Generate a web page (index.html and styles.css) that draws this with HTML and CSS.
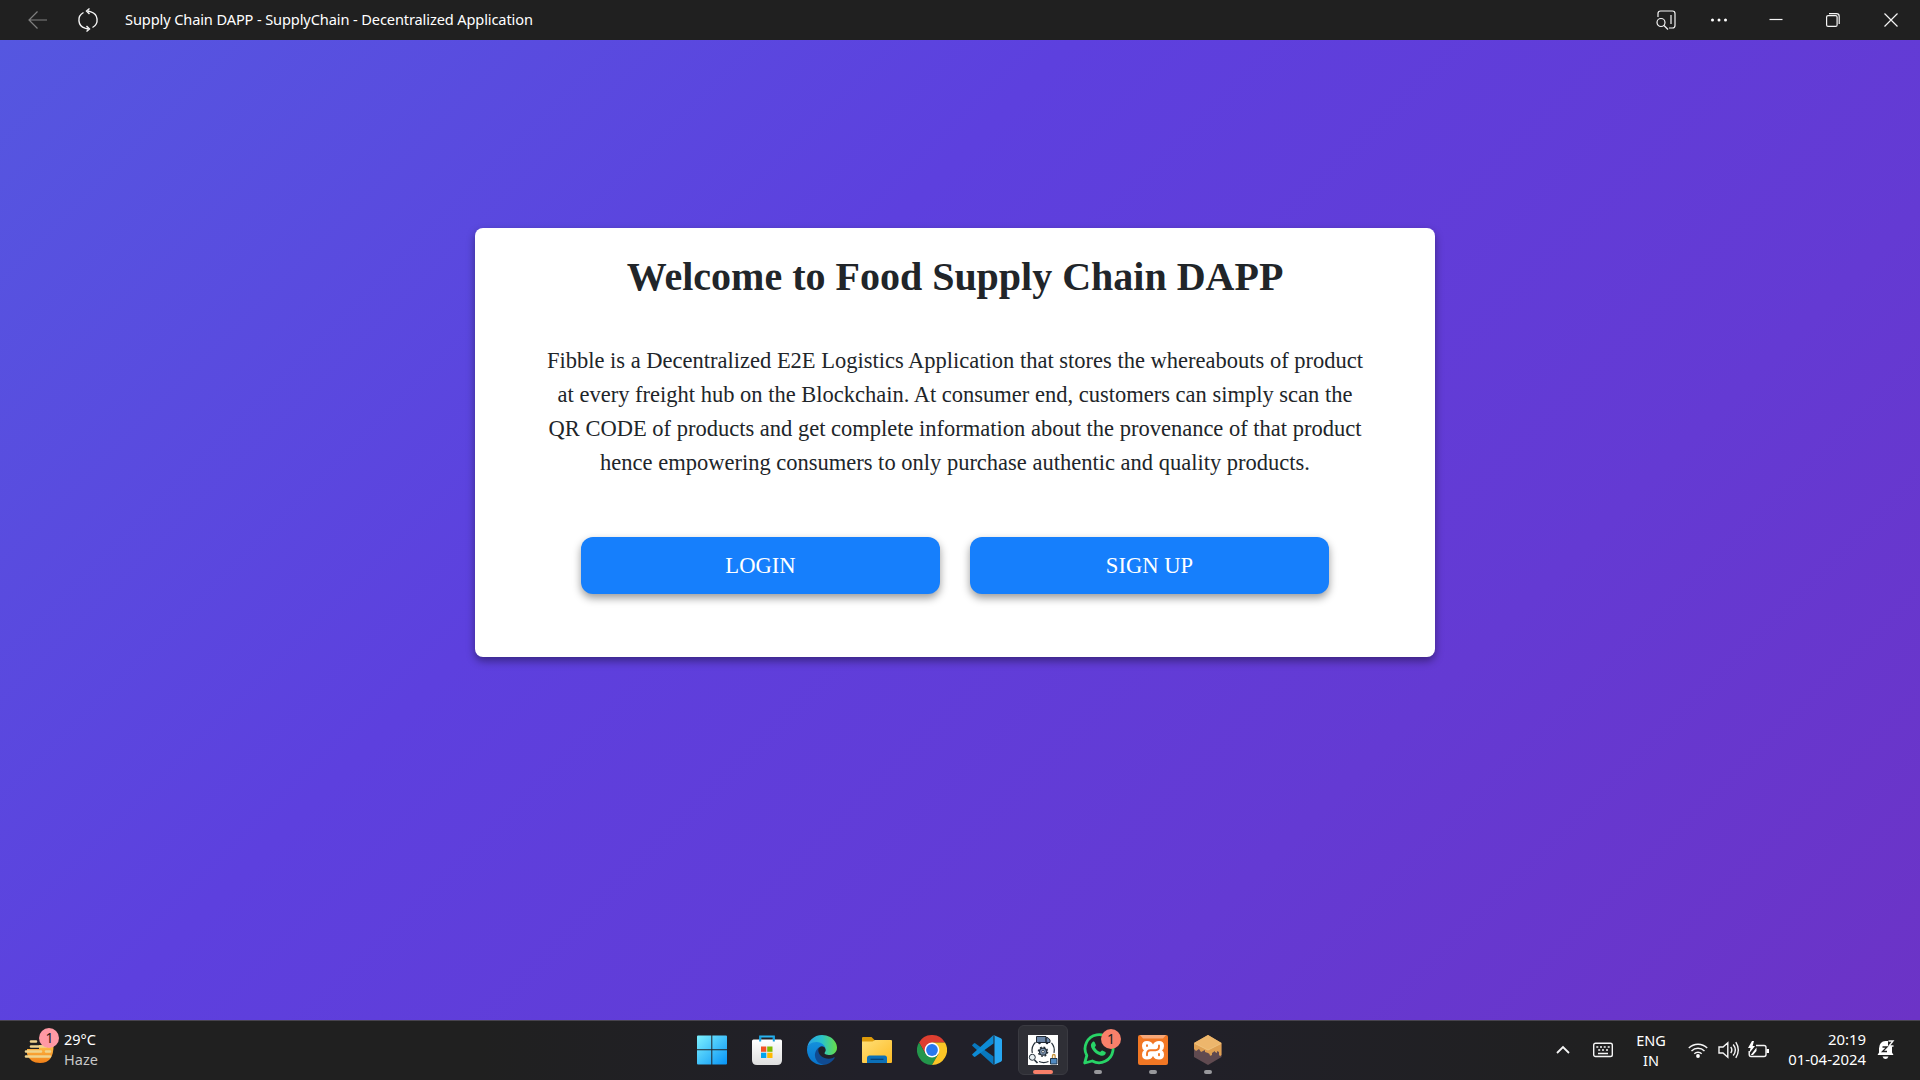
FILE: index.html
```html
<!DOCTYPE html>
<html lang="en">
<head>
<meta charset="utf-8">
<title>Supply Chain DAPP</title>
<link rel="stylesheet" href="styles.css">
</head>
<body>
<header class="titlebar">
  <svg class="back" width="20" height="20" viewBox="0 0 20 20"><path d="M19 10H1M9.500 1.500L1 10l8.500 8.500"/></svg>
  <svg class="reload" width="20" height="24" viewBox="0 0 20 24"><path d="M5.500 4.500A8.500 8.500 0 0 0 7 20.200L10 21M14.500 19.500A8.500 8.500 0 0 0 13 3.800L10 3M11.500 .5L8.500 3l3 3M8.500 18l3 3-3 2.500"/></svg>
  <span class="app-title">Supply Chain DAPP - SupplyChain - Decentralized Application</span>
  <div class="controls">
    <svg width="20" height="20" viewBox="0 0 20 20"><path d="M2 7V3.500Q2 1 4.500 1h12Q19 1 19 3.500v12Q19 18 16.500 18H13M15 5v9"/><circle cx="5" cy="12.500" r="4"/><path d="M8 15.500l4 4"/></svg>
    <svg width="20" height="20" viewBox="0 0 20 20"><g class="solid"><circle cx="3.500" cy="10" r="1.500"/><circle cx="10" cy="10" r="1.500"/><circle cx="16.500" cy="10" r="1.500"/></g></svg>
    <svg width="14" height="14" viewBox="0 0 14 14"><path d="M.5 6.500h13"/></svg>
    <svg width="14" height="14" viewBox="0 0 14 14"><rect x=".6" y="2.600" width="10.500" height="10.800" rx="1.500"/><path d="M3 .6h7.500Q13.200 .6 13.200 3.300V11"/></svg>
    <svg width="14" height="14" viewBox="0 0 14 14"><path d="M.5 .5l13 13M13.500 .5l-13 13"/></svg>
  </div>
</header>
<main class="page">
  <section class="card">
    <h1>Welcome to Food Supply Chain DAPP</h1>
    <p>Fibble is a Decentralized E2E Logistics Application that stores the whereabouts of product<br>at every freight hub on the Blockchain. At consumer end, customers can simply scan the<br>QR CODE of products and get complete information about the provenance of that product<br>hence empowering consumers to only purchase authentic and quality products.</p>
    <div class="actions"><button type="button">LOGIN</button><button type="button">SIGN UP</button></div>
  </section>
</main>
<footer class="taskbar">
  <div class="weather">
    <svg width="36" height="38" viewBox="0 0 36 38">
      <defs><linearGradient id="sun" x2="0" y2="1"><stop offset="0" stop-color="#ffc14c"/><stop offset="1" stop-color="#f18018"/></linearGradient></defs>
      <path d="M3 22H15V18H29.500Q30 36 16 36 6 36 3 27z" fill="url(#sun)"/>
      <path d="M7 14.500h5M7 19.500h15M2 24.500h15M22 24.500h4M2 29.500h24" stroke="#efd48d" stroke-width="2.600" stroke-linecap="round"/>
      <circle cx="25" cy="11" r="10" fill="#ff99a4"/><text x="25.500" y="16" class="badge">1</text>
    </svg>
    <div><div>29°C</div><div class="dim">Haze</div></div>
  </div>
  <nav class="apps">
    <div class="app"><svg width="30" height="30" viewBox="0 0 30 30"><defs><linearGradient id="win" x2="1" y2="1"><stop offset="0" stop-color="#7df1ff"/><stop offset="1" stop-color="#0793f5"/></linearGradient></defs><path d="M0 1.500Q0 .5 1 .5H14.300V14.300H0zM15.300 .5H29q1 0 1 1V14.300H15.300zM0 15.300H14.300V29.500H1q-1 0-1-1zM15.300 15.300H30V28.500q0 1-1 1H15.300z" fill="url(#win)"/></svg></div>
    <div class="app"><svg width="30" height="30" viewBox="0 0 30 30"><path d="M8.200 6V1.500H21.800V6" fill="none" stroke="#2ab4ef" stroke-width="2"/><defs><linearGradient id="bag" x2="0" y2="1"><stop offset="0" stop-color="#fff"/><stop offset="1" stop-color="#dedede"/></linearGradient></defs><path d="M1.500 4.500h27q1.500 0 1.500 1.500V25q0 5-5 5H5q-5 0-5-5V6q0-1.500 1.500-1.500z" fill="url(#bag)"/><path d="M8.200 6.500V1.500M21.800 6.500V1.500" stroke="#169fe0" stroke-width="2"/><path fill="#f25022" d="M9 11.500h5.300v5.300H9z"/><path fill="#7fba00" d="M15.200 11.500h5.300v5.300h-5.300z"/><path fill="#00a4ef" d="M9 17.700h5.300V23H9z"/><path fill="#ffb900" d="M15.200 17.700h5.300V23h-5.300z"/></svg></div>
    <div class="app"><svg width="30" height="30" viewBox="0 0 256 256"><defs><linearGradient id="edgeTop"><stop offset="0" stop-color="#299fea"/><stop offset=".5" stop-color="#2ac3c9"/><stop offset="1" stop-color="#68df45"/></linearGradient><linearGradient id="edgeLow" x2="0" y2="1"><stop offset="0" stop-color="#1491dd"/><stop offset="1" stop-color="#0873cb"/></linearGradient></defs>
      <path fill="#104b92" d="M231 190.500a94 94 0 0 1-10.500 4.700 102 102 0 0 1-35.900 6.400c-47.300 0-88.500-32.500-88.500-74.300a31.500 31.500 0 0 1 16.400-27.300c-42.800 1.800-53.800 46.400-53.800 72.500 0 73.900 68.100 81.400 82.800 81.400 7.900 0 19.800-2.300 27-4.600l1.300-.4a128 128 0 0 0 66.600-52.800 4 4 0 0 0-5.400-5.600z"/>
      <path fill="url(#edgeLow)" d="M105.700 241.400A79 79 0 0 1 83 220a80.700 80.700 0 0 1 29.500-120c3.200-1.500 8.500-4.100 15.600-4a32 32 0 0 1 25.700 13 31 31 0 0 1 6.300 18.700c0-.2 24.500-79.600-80-79.600C36 48 0 89.700 0 126.300a130 130 0 0 0 12.100 56 128 128 0 0 0 156.400 67 75 75 0 0 1-62.800-7.900z"/>
      <path fill="url(#edgeTop)" d="M152.300 148.900c-.8 1-3.300 2.500-3.300 5.600 0 2.600 1.700 5.200 4.800 7.300 14.300 10 41.400 8.600 41.500 8.600a59.600 59.600 0 0 0 30.300-8.300 61.400 61.400 0 0 0 30.400-52.900c.3-22.400-8-37.300-11.300-43.900C223.500 23.900 177.700 0 128 0A128 128 0 0 0 0 126.200C.5 89.700 36.800 60.200 80 60.200c3.500 0 23.500.3 42 10.100 16.300 8.600 24.900 19 30.800 29.200 6.200 10.700 7.300 24.100 7.300 29.500s-2.700 13.300-7.800 19.900z"/></svg></div>
    <div class="app"><svg width="30" height="28" viewBox="0 0 30 28"><defs><linearGradient id="fold" x2="1" y2="1"><stop offset="0" stop-color="#ffdf77"/><stop offset="1" stop-color="#fdbb24"/></linearGradient></defs><path d="M0 10V2Q0 1 1 1H9.500L13 4.500V10z" fill="#dd9a0a"/><path d="M0 5.500h10.500L13 4H29q1 0 1 1V26q0 1-1 1H1q-1 0-1-1z" fill="url(#fold)"/><path d="M5 27V22q0-2.500 2.500-2.500h15Q25 19.500 25 22v5z" fill="#0c70b8"/><path d="M8.500 23.300h13" stroke="#073e70" stroke-width="1.200"/></svg></div>
    <div class="app"><svg width="30" height="30" viewBox="0 0 30 30"><path fill="#dd3e30" d="M15 15V7.500H28A15 15 0 0 0 2 7.500L8.500 18.700z"/><path fill="#23964b" d="M15 15L8.500 18.700 2 7.500A15 15 0 0 0 15 30l6.500-11.200z"/><path fill="#fbc526" d="M15 15l6.500 3.800L15 30A15 15 0 0 0 28 7.500H15z"/><circle cx="15" cy="15" r="7.400" fill="#fff"/><circle cx="15" cy="15" r="5.900" fill="#2878ed"/></svg></div>
    <div class="app"><svg width="30" height="30" viewBox="0 0 30 30"><path fill="#0878be" d="M1.800 8.400L.5 9.700q-.7.700 0 1.400L21.500 30V21.500L3.500 8.400q-.9-.7-1.700 0z"/><path fill="#0d8bd5" d="M1.800 21.600L.5 20.300q-.7-.7 0-1.400L21.500 0v8.500L3.500 21.600q-.9.700-1.700 0z"/><path fill="#27a7f2" d="M21.500 0L28.800 3.200Q30 3.800 30 5V25q0 1.200-1.200 1.800L21.500 30q1-.5 1-1.500v-27Q22.500.5 21.500 0z"/></svg></div>
    <div class="app active"><svg width="30" height="30" viewBox="0 0 30 30"><path fill="#fff" d="M0 0h30v30H0z"/><path d="M7.500 7.200A11.500 11.500 0 0 0 4.300 18M23.500 7.800a11.500 11.500 0 0 1 2.500 10M11 26.500a11.500 11.500 0 0 0 9.500 0" fill="none" stroke="#26303a" stroke-width="1.200"/><path d="M8.500 1.500H18v6H8.500zM18 2.700h2l2 2.300v2.500h-4z" fill="#6a84a6" stroke="#202833"/><circle cx="11.500" cy="8" r="1.300" fill="#1c2733"/><circle cx="19" cy="8" r="1.300" fill="#1c2733"/><circle cx="15" cy="16.700" r="4.600" fill="none" stroke="#202b36" stroke-width="1.400" stroke-dasharray="1.800 1.810"/><circle cx="15" cy="16.700" r="3.500" fill="#7f96b4" stroke="#202b36" stroke-width="1.200"/><circle cx="15" cy="16.700" r="1.300" fill="#fff" stroke="#202b36" stroke-width=".8"/><circle cx="4.300" cy="22.300" r="3" fill="#eaf1f4" stroke="#26303a"/><path d="M6.500 25l3 3" stroke="#26303a" stroke-width="1.700"/><path d="M22.500 23.500h6.500v5.500h-6.500z" fill="#508ac2" stroke="#24394d"/><path d="M24.500 23v-2.300q0-1.200 1.300-1.200t1.300 1.200V23" fill="none" stroke="#c8943d" stroke-width="1.300"/></svg><i></i></div>
    <div class="app run"><svg class="whatsapp" width="38" height="38" viewBox="0 0 38 38"><path d="M4 34L6.100 26.500A14 14 0 1 1 11.600 32z" transform="translate(-2.300)" fill="#202024" stroke="#28d467" stroke-width="2.800" stroke-linejoin="round"/><path d="M12.200 13.800c.9-.8 1.700-.6 2.100.2l1.200 2.800c.3.700-.9 1.800-1.200 2.300 1.300 2.400 3 3.700 5.500 4.800.9-1 1.400-2 2.200-1.600l3 1.500c.8.500.2 2.200-.8 3-1.500 1.200-3.700.9-6.600-.5-3.100-1.600-5.500-4.200-6.700-7.100-.8-2.200-.4-4 1.300-5.400z" transform="translate(-2.600 -.8)" fill="#28d467"/><circle cx="28" cy="10" r="10" fill="#f8806a"/><text x="28" y="15" class="badge">1</text></svg><i></i></div>
    <div class="app run"><svg width="30" height="30" viewBox="0 0 30 30"><rect width="30" height="30" rx="2" fill="#f27724"/><path d="M2 0h26L25 3.500H5z" fill="#f8a878"/><path d="M9 6q4.500 0 6 3.500Q16.500 6 21 6q5 0 5 5 0 3-2 4.200 2 1.500 2 4.300 0 5-5 5-4.500 0-6-3.500-1.500 3.500-6 3.500-5 0-5-5 0-2.800 2-4.300Q4 14 4 11q0-5 5-5z" fill="#fff"/><path d="M9 10.300v.8M12.500 15.200h5q3.500 0 3.500-3.700v-1M12.500 15.200Q9 15.200 9 19v1.200M21 19v1.200" fill="none" stroke="#f27724" stroke-width="1.900" stroke-linecap="round"/></svg><i></i></div>
    <div class="app run"><svg width="28" height="30" viewBox="0 0 28 30"><path fill="#604a50" d="M0 8l14 7 13.500-7V22L14 30 0 22z"/><path fill="#dfa053" d="M0 8L14 0l13.500 8v12q-2 2-2.500-.5V17l-2-1v2l-2-1v-1l-3 2v2q-2.500 2-2.500-1L14 18l-3-1v-2l-2 1-2 1-2-3-3 2-2-2z"/><path fill="#edb66c" d="M0 8L14 0l13.500 8L14 15z"/><path d="M1 8.500l13 6.500 13-6.500" fill="none" stroke="#f0c37f"/></svg><i></i></div>
  </nav>
  <div class="tray">
    <svg class="chev" width="14" height="10" viewBox="0 0 14 10"><path d="M1 8l6-6 6 6" stroke-width="1.800"/></svg>
    <svg class="keys" width="20" height="16" viewBox="0 0 20 16"><rect x=".7" y="1.300" width="18.600" height="13.200" rx="1.800"/><path d="M3.300 5h2M7 5h2M10.700 5h2M14.700 5h2M5.200 8h2M9 8h2M13 8h2M5 11.500h10" stroke-width="1.500"/></svg>
    <div class="lang">ENG<br>IN</div>
    <svg class="wifi" width="20" height="16" viewBox="0 0 20 16"><path d="M.8 6a13 13 0 0 1 18.400 0M3.500 9a9.200 9.200 0 0 1 13 0M6.300 11.800a5.300 5.300 0 0 1 7.400 0"/><circle class="solid" cx="10" cy="14" r="1.900"/></svg>
    <svg class="sound" width="21" height="18" viewBox="0 0 21 18"><path d="M1 6h4l4.800-4.200v14.400L5 12H1zM12.700 6q2.300 3 0 6M15.200 3.500q4.300 5.500 0 11M17.800 1.200q5 7.800 0 15.600"/></svg>
    <svg class="batt" width="21" height="17" viewBox="0 0 21 17"><path d="M8 4.500h8Q18 4.500 18 6.500v7q0 2-2 2H3Q1.200 15.500 1.200 13.500V10"/><path class="solid" d="M4 0L0 7h2.600L1 12.500 7 5H4.600L6 0zM8.500 6.500L2.800 14H5l3.500-4zM18.500 8H21v4h-2.500z"/></svg>
    <div class="clock">20:19<br>01-04-2024</div>
    <svg class="bell" width="18" height="20" viewBox="0 0 18 20"><path class="solid" d="M2 8.500Q2.500 1 8.500 1H11v5h4v6.500l1.500 2.500H.5L2 12.500zM5.500 16.500h6q-1 2.500-3 2.500t-3-2.500z"/><path d="M11.500 1h4.500l-4 5h4.500" stroke-width="1.400"/><path d="M5.500 7h4.500l-4.500 4.500h4.500" stroke="#202020" stroke-width="1.300"/></svg>
  </div>
</footer>
</body>
</html>
```
FILE: styles.css
```css
* { box-sizing: border-box; }
body { margin: 0; height: 1080px; overflow: hidden; display: flex; flex-direction: column; font-family: "Noto Sans", sans-serif; }
svg { display: block; flex: none; }
.titlebar { height: 40px; background: #202020; color: #fff; display: flex; align-items: center; padding: 0 22px 1px 28px; }
.titlebar svg, .tray svg { fill: none; stroke: #f5f5f5; stroke-width: 1.2; overflow: visible; }
.titlebar .back { stroke: #808080; margin: 0 30px 0 -1px; }
.titlebar .back { margin-left: 0; }
.titlebar .reload { margin-right: 27px; stroke-width: 1.4; }
.app-title { font-size: 14.6px; letter-spacing: -.12px; white-space: nowrap; padding-bottom: 2px; }
.controls { margin-left: auto; display: flex; align-items: center; }
.controls svg:nth-child(1) { margin-right: 33px; }
.controls svg:nth-child(2) { margin-right: 40px; }
.controls svg:nth-child(3) { margin-right: 43px; }
.controls svg:nth-child(4) { margin-right: 44px; }
.solid, .titlebar .solid, .tray .solid { fill: #fff; stroke: none; }
.page { height: 980px; padding-top: 188px; background: linear-gradient(135deg, #5557e0 0%, #5d40de 37%, #643ad3 72%, #6c33c6 100%); }
.card { width: 960px; height: 429px; margin-left: 475px; background: #fff; border-radius: 8px; box-shadow: 0 4px 8px rgba(0,0,0,.4); color: #212529; font-family: "Liberation Serif", serif; text-align: center; padding-top: 25px; }
h1 { margin: 0; font-size: 40px; line-height: 48px; white-space: nowrap; }
.card p { margin: 43px 0 0; font-size: 22.5px; line-height: 34px; white-space: nowrap; }
.actions { display: flex; justify-content: center; gap: 30px; margin-top: 57px; }
.actions button { width: 359px; height: 57px; border: 0; border-radius: 12px; padding: 0; background: #167ffc; color: #fff; font: 22.6px "Liberation Serif", serif; box-shadow: 0 4px 8px rgba(0,0,0,.4); }
.taskbar { height: 60px; border-top: 1px solid #48444f; background: linear-gradient(90deg, #202020 25%, #212029 45%, #212029 60%, #202020 85%); display: grid; grid-template-columns: 687px 548px 1fr; color: #fff; font-size: 14.5px; line-height: 20px; }
.weather { display: flex; padding: 6px 0 0 24px; gap: 4px; }
.weather > div { padding-top: 2px; }
.dim { color: #c8c8c8; }
.badge { font-size: 14px; text-anchor: middle; fill: #202020; }
.apps { display: flex; gap: 5.1px; padding-top: 4px; }
.app { width: 50px; height: 50px; position: relative; display: grid; place-items: center; border-radius: 6px; border: 1px solid transparent; flex: none; }
.active { background: #2f2f36; border-color: #3a3a41; }
.whatsapp { margin: -4px -4px 0 4px; }
.app i { position: absolute; bottom: 0; left: 50%; transform: translateX(-50%); width: 8px; height: 4px; border-radius: 2px; background: #98989c; }
.active i { width: 20px; background: #f8806a; }
.tray { display: flex; align-items: center; padding: 0 0 2px 321px; }
.tray svg { stroke-width: 1.4; }
.tray .chev { margin-right: 23px; }
.lang { width: 48px; margin: 0 13px 0 14px; text-align: center; }
.tray .wifi { margin-right: 10px; }
.tray .sound { margin-right: 9px; }
.clock { width: 97px; text-align: right; font-size: 14.9px; padding-bottom: 2px; }
.tray .bell { margin-left: 11px; }
```
